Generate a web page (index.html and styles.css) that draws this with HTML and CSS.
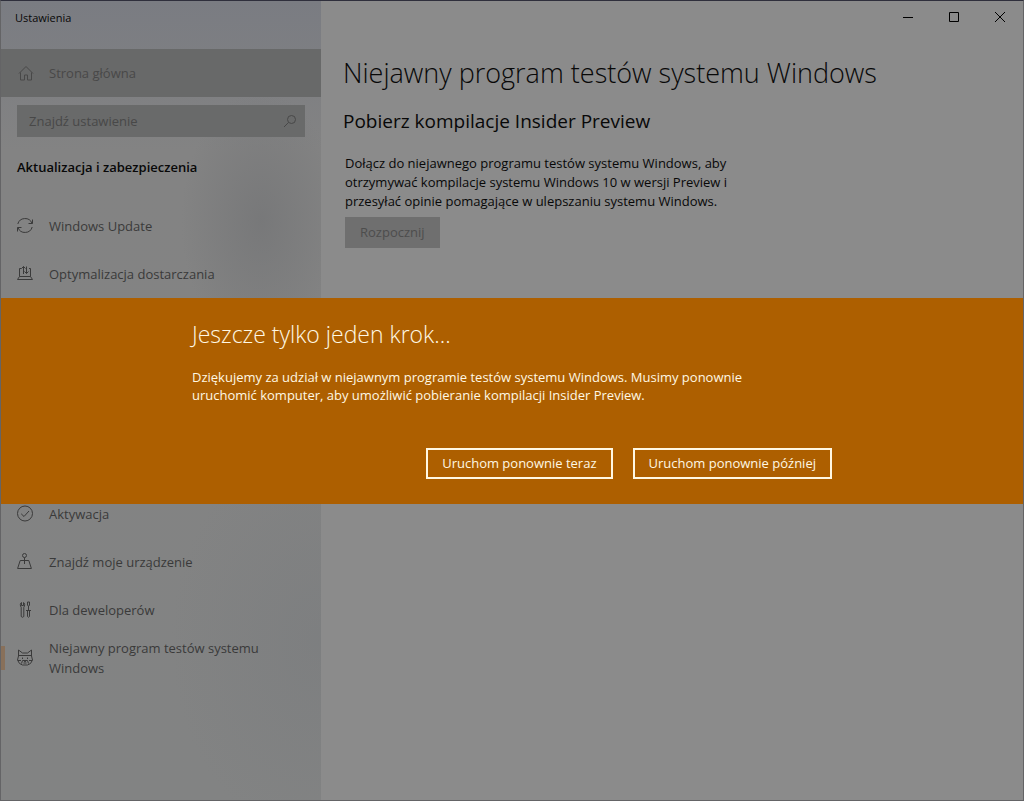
FILE: index.html
```html
<!DOCTYPE html>
<html lang="pl">
<head>
    <meta charset="UTF-8">
    <title>Ustawienia</title>
    <link rel="stylesheet" href="styles.css">
</head>
<body>
    <div class="window">
        <aside class="sidebar">
            <div class="app-title">Ustawienia</div>
            <a class="nav-item home" href="#">
                <svg class="icon" viewBox="0 0 16 16"><path d="M2 8.500 9 1.500 16 8.500M3.500 7.500V15H7.500V10H10.500V15H14.500V7.500"/></svg>
                <span>Strona główna</span>
            </a>
            <form class="search">
                <input type="text" placeholder="Znajdź ustawienie" aria-label="Znajdź ustawienie">
                <svg class="search-icon" viewBox="0 0 14 14"><circle cx="8.500" cy="5.500" r="4"/><path d="M5.600 8.400 1 13"/></svg>
            </form>
            <h3 class="section-title">Aktualizacja i zabezpieczenia</h3>
            <nav class="nav">
                <div class="nav-group">
                    <a class="nav-item" href="#">
                        <svg class="icon" viewBox="0 0 16 16"><path d="M.8 6A7.500 7.500 0 0 1 15 5.300M15.500 1.500V5.500H11.500M15.200 9A7.500 7.500 0 0 1 1 9.700M.5 13.500V9.500H4.500"/></svg>
                        <span>Windows Update</span>
                    </a>
                    <a class="nav-item" href="#">
                        <svg class="icon" viewBox="0 0 16 16"><path d="M4.500 2.500H2.500V10.500L.5 13.500H15.500L13.500 10.500V2.500H12M2.500 10.500H13.500M6.500 8V.5M4.500 2.500 6.500.5 8.500 2.500M9.500 .5V7.500M7.500 5.500 9.500 7.500 11.500 5.500"/></svg>
                        <span>Optymalizacja dostarczania</span>
                    </a>
                </div>
                <div class="nav-group">
                    <a class="nav-item" href="#">
                        <svg class="icon" viewBox="0 0 16 16"><circle cx="8" cy="7.500" r="7.500"/><path d="M4.200 7.800 7 10.500 12 5"/></svg>
                        <span>Aktywacja</span>
                    </a>
                    <a class="nav-item" href="#">
                        <svg class="icon" viewBox="0 0 16 16"><circle cx="7.500" cy="1.500" r="2"/><path d="M7.500 3.500V10M6 6.500H3.200L.6 14.500H14.400L11.800 6.500H9M4 6.500H11"/></svg>
                        <span>Znajdź moje urządzenie</span>
                    </a>
                    <a class="nav-item" href="#">
                        <svg class="icon" viewBox="0 0 16 16"><path d="M4.500 .5V3.500H6.500V.5C8 1 8 4 6.800 5.200V14.500Q5.500 16 4.200 14.500V5.200C3 4 3 1 4.500 .5ZM10.500 0H12.500V3L11.500 4.500 10.500 3ZM11.500 4V8.500M9 8.500H14M10.500 8.500V14.500Q11.500 16 12.500 14.500V8.500"/></svg>
                        <span>Dla deweloperów</span>
                    </a>
                    <a class="nav-item active" href="#">
                        <svg class="icon" viewBox="0 0 16 16"><path d="M1.500 0 5.500 3H10.500L14.500 0V6L15.500 10 13.500 13.500 10.500 15H5.500L2.500 13.500 .5 10 1.500 6ZM2 5.500H14M1 10.500H4M12 10.500H15M5.500 7.500V9M10.500 7.500V9M4.500 13.500 5.500 10.500H10.500L11.500 13.500M7 10.500 8 12 9 10.500M6.500 13H9.500"/></svg>
                        <span>Niejawny program testów systemu Windows</span>
                    </a>
                </div>
            </nav>
        </aside>
        <main class="content">
            <div class="window-controls">
                <button aria-label="Minimalizuj"><svg viewBox="0 0 10 10"><path d="M0 5.500H10"/></svg></button>
                <button aria-label="Maksymalizuj"><svg viewBox="0 0 10 10"><path d="M.5.5H9.500V9.500H.5Z"/></svg></button>
                <button aria-label="Zamknij"><svg viewBox="0 0 10 10"><path d="M0 0 10 10M10 0 0 10"/></svg></button>
            </div>
            <h1>Niejawny program testów systemu Windows</h1>
            <h2>Pobierz kompilacje Insider Preview</h2>
            <p>Dołącz do niejawnego programu testów systemu Windows, aby otrzymywać kompilacje systemu Windows 10 w wersji Preview i przesyłać opinie pomagające w ulepszaniu systemu Windows.</p>
            <button class="start-button" disabled>Rozpocznij</button>
        </main>
    </div>

    <div class="overlay">
        <div class="dialog" role="dialog" aria-labelledby="dialog-title">
            <div class="dialog-body">
                <h2 id="dialog-title">Jeszcze tylko jeden krok...</h2>
                <p>Dziękujemy za udział w niejawnym programie testów systemu Windows. Musimy ponownie uruchomić komputer, aby umożliwić pobieranie kompilacji Insider Preview.</p>
                <div class="dialog-buttons">
                    <button>Uruchom ponownie teraz</button>
                    <button>Uruchom ponownie później</button>
                </div>
            </div>
        </div>
    </div>
</body>
</html>
```
FILE: styles.css
```css
* {
    box-sizing: border-box;
}
body {
    margin: 0;
    font-family: "Segoe UI", "Open Sans", "Noto Sans", sans-serif;
    font-size: 13px;
    line-height: 19px;
    color: #080808;
    background-color: #8b8b8b;
}
h1, h2, h3, p {
    margin: 0;
    font-weight: 400;
}
button, input {
    font: inherit;
    border: none;
    border-radius: 0;
}
svg {
    fill: none;
    stroke: currentColor;
}
.window {
    display: flex;
    min-height: 100vh;
    border: 1px solid #646466;
    border-top-color: #2f2f3c;
}

/* left column */
.sidebar {
    flex: 0 0 320px;
    background:
        radial-gradient(ellipse 80px 130px at 260px 220px, rgba(112, 113, 115, 0.6), rgba(124, 125, 127, 0)),
        radial-gradient(ellipse 150px 200px at 320px 640px, rgba(122, 124, 126, 0.6), rgba(126, 127, 128, 0)),
        linear-gradient(#7a7c82, #838383 150px, #828383);
}
.app-title {
    height: 48px;
    padding: 7px 14px;
    font-size: 11px;
}
.nav-item {
    display: flex;
    align-items: center;
    gap: 16px;
    height: 48px;
    padding: 0 16px;
    line-height: 20px;
    color: #3a3a3a;
    text-decoration: none;
}
.icon {
    flex: none;
    width: 16px;
    height: 16px;
    overflow: visible;
}
.home {
    color: #484848;
    background-color: #686969;
}
.search {
    display: flex;
    align-items: center;
    height: 32px;
    margin: 8px 16px;
    padding: 0 8px 0 12px;
    color: #484848;
    background-color: #696a6a;
}
.search input {
    flex: 1;
    min-width: 0;
    padding: 0;
    color: inherit;
    background: none;
    outline: none;
}
.search input::placeholder {
    color: #484848;
    opacity: 1;
}
.search-icon {
    width: 14px;
    height: 14px;
}
.section-title {
    padding: 12px 16px 25px;
    font-size: 13px;
    line-height: 20px;
    font-weight: 600;
}
.nav {
    display: flex;
    flex-direction: column;
    gap: 192px;
}
.active {
    background: linear-gradient(#88705a, #88705a) left center / 4px 24px no-repeat;
}

/* right column */
.content {
    flex: 1;
    padding-left: 22px;
}
.window-controls {
    display: flex;
    justify-content: flex-end;
}
.window-controls button {
    display: flex;
    align-items: center;
    justify-content: center;
    width: 46px;
    height: 32px;
    padding: 0;
    background: none;
}
.window-controls svg {
    width: 10px;
    height: 10px;
}
.content h1 {
    margin-top: 22px;
    font-size: 27px;
    line-height: 36px;
    font-weight: 300;
}
.content h2 {
    margin-top: 16px;
    font-size: 19px;
    line-height: 28px;
}
.content p {
    max-width: 412px;
    margin: 19px 0 6px;
    padding-left: 2px;
}
.start-button {
    height: 31px;
    margin-left: 2px;
    padding: 0 15px;
    color: #4d4d4d;
    background-color: #6f6f6f;
}

/* restart prompt */
.overlay {
    position: fixed;
    inset: 0;
    display: flex;
    align-items: center;
    padding: 0 1px;
}
.dialog {
    width: 100%;
    padding: 20px 16px 25px;
    color: #fff8e4;
    background-color: #ad5f00;
}
.dialog-body {
    max-width: 640px;
    margin: 0 auto;
}
.dialog h2 {
    font-size: 23px;
    line-height: 32px;
    font-weight: 300;
}
.dialog p {
    max-width: 580px;
    margin: 18px 0 44px;
    line-height: 18px;
}
.dialog-buttons {
    display: flex;
    justify-content: flex-end;
    gap: 20px;
}
.dialog button {
    height: 31px;
    padding: 0 14px;
    color: inherit;
    background: none;
    border: 2px solid #fff8e4;
}
```
